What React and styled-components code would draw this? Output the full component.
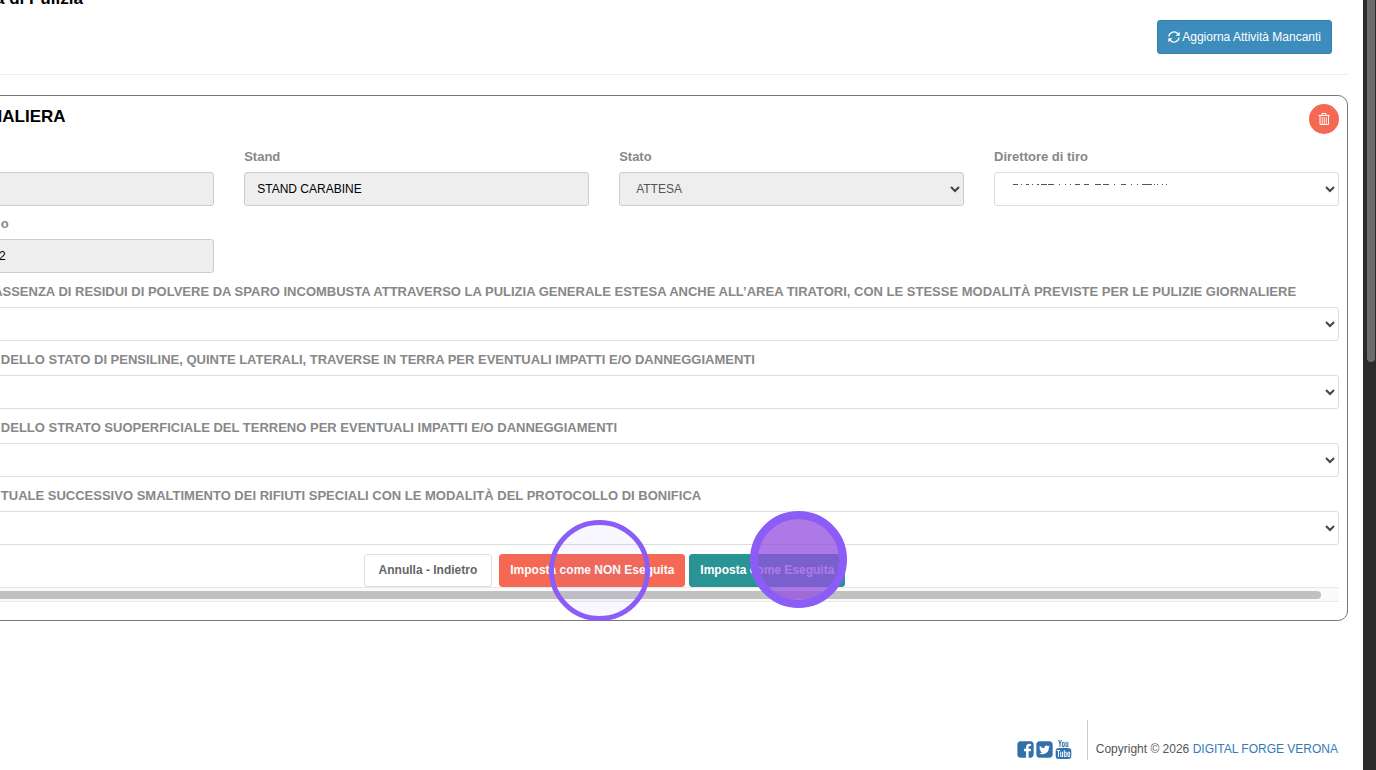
import React from 'react';
import styled, { createGlobalStyle } from 'styled-components';
import { TfiYoutube } from 'react-icons/tfi';

const GlobalStyle = createGlobalStyle`
    * {
        box-sizing: border-box;
    }
    body {
        margin: 0;
        overflow: hidden;
        background: #fff;
        color: #000;
        font-family: "Liberation Sans", Arial, sans-serif;
        font-size: 12px;
        line-height: 20px;
    }
    button, input, select {
        font: inherit;
    }
`;

const Window = styled.div`
    display: flex;
    min-height: 100vh;
    overflow: hidden;
`;

const Page = styled.div`
    flex: 1;
    min-width: 0;
    display: flex;
    flex-direction: column;
    padding-right: 15px;
    margin-left: -11px;
`;

const ScrollTrack = styled.div`
    width: 13px;
    padding: 0 1px 0 4px;
    background: #2b2b2b;
`;

const ScrollThumb = styled.div`
    height: 47vh;
    border-radius: 0 0 4px 4px;
    background: #6b6b6b;
`;

const Header = styled.header`
    display: flex;
    justify-content: space-between;
    align-items: flex-start;
    height: 75px;
    padding: 0 16px 0 6px;
    border-bottom: 1px solid #eee;
`;

const PageTitle = styled.h1`
    margin: -11px 0 0;
    font-size: 17px;
    line-height: 20px;
`;

const RefreshButton = styled.button`
    display: flex;
    align-items: center;
    gap: 2px;
    height: 34px;
    margin-top: 20px;
    padding: 0 10px;
    border: 1px solid #367fa9;
    border-radius: 3px;
    background: #3c8dbc;
    color: #fff;
`;

const Card = styled.section`
    margin-top: 20px;
    border: 1px solid #777;
    border-radius: 10px;
    padding: 8px 8px 18px 0;
`;

const CardHeader = styled.div`
    display: flex;
    justify-content: space-between;
    align-items: flex-start;
    height: 45px;
`;

const CardTitle = styled.h2`
    margin: 3px 0 0;
    font-size: 17px;
    line-height: 20px;
`;

const DeleteButton = styled.button`
    display: flex;
    align-items: center;
    justify-content: center;
    width: 30px;
    height: 30px;
    padding: 0;
    border: 0;
    border-radius: 50%;
    background: #f56954;
    color: #fff;
`;

const Fields = styled.div`
    display: grid;
    grid-template-columns: 13fr 20fr 20fr 20fr;
    gap: 10px 30px;
    margin-bottom: 11px;
`;

const Field = styled.div`
    display: flex;
    flex-direction: column;
    position: relative;
`;

const Questions = styled.div`
    display: flex;
    flex-direction: column;
    gap: 11px;
`;

const Label = styled.label`
    height: 23px;
    line-height: 16px;
    font-size: 13px;
    font-weight: bold;
    color: #888;
    white-space: pre;
`;

const Input = styled.input`
    width: 100%;
    height: 34px;
    padding: 0 12px 0 ${p => (p.$cut ? '8px' : '12px')};
    border: 1px solid #ccc;
    border-radius: 3px;
    background: #eee;
    color: #000;
`;

const Select = styled.select`
    appearance: none;
    width: 100%;
    height: 34px;
    padding: 0 24px 0 16px;
    border: 1px solid ${p => (p.disabled ? '#ccc' : '#ddd')};
    border-radius: 3px;
    background: ${p => (p.disabled ? '#eee' : '#fff')}
        url("data:image/svg+xml,%3Csvg xmlns='http://www.w3.org/2000/svg' width='10' height='7' fill='none' stroke='%23444' stroke-width='2'%3E%3Cpath d='M1 1l4 4 4-4'/%3E%3C/svg%3E")
        no-repeat right 3px center;
    color: #555;
    opacity: 1;
`;

const Redacted = styled.svg`
    position: absolute;
    left: 17px;
    bottom: 21px;
`;

const Actions = styled.div`
    display: flex;
    justify-content: center;
    gap: 4px;
    padding: 9px 120px 0 0;
`;

const colors = {
    danger: '#f56954',
    success: '#2a9494',
};

const Button = styled.button`
    height: 33px;
    padding: 0 ${p => (p.$color ? '10px' : '14px')} 2px;
    margin-right: ${p => (p.$color ? '0' : '3px')};
    border: 1px solid ${p => colors[p.$color] || '#ddd'};
    border-radius: 3px;
    background: ${p => colors[p.$color] || '#fff'};
    color: ${p => (p.$color ? '#fff' : '#666')};
    font-weight: bold;
    white-space: nowrap;
`;

const Mark = styled.span`
    position: relative;
    display: inline-flex;
`;

const Circle = styled.span`
    position: absolute;
    left: ${p => p.$left}px;
    top: ${p => p.$top}px;
    width: ${p => p.$size}px;
    height: ${p => p.$size}px;
    border: ${p => p.$ring}px solid #8b5cf6;
    border-radius: 50%;
    background: ${p => p.$fill};
    pointer-events: none;
`;

const HorizontalTrack = styled.div`
    height: 15px;
    padding: 3px 18px 3px 0;
    border: solid #e8e8e8;
    border-width: 1px 0;
    background: #fafafa;
`;

const HorizontalThumb = styled.div`
    height: 8px;
    border-radius: 4px;
    background: #c1c1c1;
`;

const Footer = styled.footer`
    display: flex;
    justify-content: flex-end;
    margin-top: auto;
    padding: 0 10px 10px 0;
    color: #555;
`;

const Social = styled.div`
    display: flex;
    align-items: flex-end;
    height: 40px;
    padding: 0 14px 1px 0;
    border-right: 1px solid #ccc;
    a {
        display: flex;
        color: #3071a9;
    }
`;

const Copyright = styled.div`
    padding: 19px 0 0 8px;
    a {
        color: #337ab7;
        text-decoration: none;
    }
`;

const RefreshIcon = () => (
    <svg width="12" height="12" viewBox="0 0 12 12" fill="none" stroke="currentColor" strokeWidth="1.3">
        <path d="M.9 5.300a5.100 5.100 0 0 1 9.100-2.400" />
        <path d="M11.700.800v4H7.700z" fill="currentColor" stroke="none" />
        <path d="M11.100 6.700a5.100 5.100 0 0 1-9.100 2.400" />
        <path d="M.3 11.200v-4h4z" fill="currentColor" stroke="none" />
    </svg>
);

const TrashIcon = () => (
    <svg width="12" height="14" viewBox="0 0 12 14" fill="none" stroke="currentColor">
        <path d="M.5 3.500h11M4 3.500V1.500h4v2M2 3.500v9h8.500v-9" />
        <path d="M4.200 5v7M6.250 5v7M8.300 5v7" strokeWidth=".9" />
    </svg>
);

const FacebookIcon = () => (
    <svg width="19" height="19" viewBox="0 0 1792 1792" fill="currentColor">
        <path d="M1376 128q119 0 203.500 84.500t84.500 203.500v960q0 119-84.500 203.500t-203.500 84.500h-188v-595h199l30-232h-229v-148q0-56 23.500-84t91.500-28l122-1v-207q-63-9-178-9-136 0-217.500 80t-81.500 226v171h-200v232h200v595h-532q-119 0-203.500-84.500t-84.500-203.500v-960q0-119 84.500-203.500t203.500-84.500h960z" />
    </svg>
);

const TwitterIcon = () => (
    <svg width="19" height="19" viewBox="0 0 1792 1792" fill="currentColor">
        <path d="M1408 610q-56 25-121 34 68-40 93-117-65 38-134 51-61-66-153-66-87 0-148.500 61.500t-61.500 148.500q0 29 5 48-129-7-242-65t-192-155q-29 50-29 106 0 114 91 175-47-1-100-26v2q0 75 50 133.500t123 72.500q-29 8-51 8-13 0-39-4 21 63 74.500 104t121.500 42q-116 90-261 90-26 0-50-3 148 94 322 94 112 0 210-35.500t168-95 120.500-137 75-162 24.500-168.500q0-18-1-27 63-45 105-109zm256-194v960q0 119-84.500 203.500t-203.500 84.500h-960q-119 0-203.500-84.500t-84.500-203.500v-960q0-119 84.500-203.500t203.500-84.500h960q119 0 203.500 84.500t84.500 203.500z" />
    </svg>
);

const questions = [
    ' ASSENZA DI RESIDUI DI POLVERE DA SPARO INCOMBUSTA ATTRAVERSO LA PULIZIA GENERALE ESTESA ANCHE ALL’AREA TIRATORI, CON LE STESSE MODALITÀ PREVISTE PER LE PULIZIE GIORNALIERE',
    '   DELLO STATO DI PENSILINE, QUINTE LATERALI, TRAVERSE IN TERRA PER EVENTUALI IMPATTI E/O DANNEGGIAMENTI',
    '   DELLO STRATO SUOPERFICIALE DEL TERRENO PER EVENTUALI IMPATTI E/O DANNEGGIAMENTI',
    '   TUALE SUCCESSIVO SMALTIMENTO DEI RIFIUTI SPECIALI CON LE MODALITÀ DEL PROTOCOLLO DI BONIFICA',
];

export default () => (
    <Window>
        <GlobalStyle />
        <Page>
            <Header>
                <PageTitle>a di Pulizia</PageTitle>
                <RefreshButton type="button">
                    <RefreshIcon />
                    Aggiorna Attività Mancanti
                </RefreshButton>
            </Header>
            <Card>
                <CardHeader>
                    <CardTitle>NALIERA</CardTitle>
                    <DeleteButton type="button" aria-label="Elimina">
                        <TrashIcon />
                    </DeleteButton>
                </CardHeader>
                <form>
                    <Fields>
                        <Field>
                            <Label htmlFor="data"> </Label>
                            <Input id="data" $cut readOnly value="" />
                        </Field>
                        <Field>
                            <Label htmlFor="stand">Stand</Label>
                            <Input id="stand" readOnly value="STAND CARABINE" />
                        </Field>
                        <Field>
                            <Label htmlFor="stato">Stato</Label>
                            <Select id="stato" disabled>
                                <option>ATTESA</option>
                            </Select>
                        </Field>
                        <Field>
                            <Label htmlFor="direttore">Direttore di tiro</Label>
                            <Select id="direttore" />
                            <Redacted width="158" height="1" stroke="#555">
                                <path d="M2 .5h5m3 0h1m4 0h3m3 0h1m4 0h2m2 0h6m1 0h6m5 0h1m5 0h1m4 0h1m4 0h5m4 0h5m6 0h6m2 0h6m5 0h1m6 0h5m5 0h1m5 0h1m4 0h10m2 0h1m2 0h1m4 0h1m3 0h1" />
                            </Redacted>
                        </Field>
                        <Field>
                            <Label htmlFor="numero">   o</Label>
                            <Input id="numero" $cut readOnly value="2" />
                        </Field>
                    </Fields>
                    <Questions>
                        {questions.map((text, i) => (
                            <Field key={text}>
                                <Label htmlFor={`domanda-${i}`}>{text}</Label>
                                <Select id={`domanda-${i}`} />
                            </Field>
                        ))}
                    </Questions>
                    <Actions>
                        <Button type="button">Annulla - Indietro</Button>
                        <Mark>
                            <Button type="button" $color="danger">Imposta come NON Eseguita</Button>
                            <Circle $left={50} $top={-34} $size={101} $ring={5} $fill="rgba(139, 92, 246, 0.05)" />
                        </Mark>
                        <Mark>
                            <Button type="button" $color="success">Imposta come Eseguita</Button>
                            <Circle $left={61} $top={-43} $size={97} $ring={8} $fill="rgba(147, 81, 223, 0.77)" />
                        </Mark>
                    </Actions>
                    <HorizontalTrack>
                        <HorizontalThumb />
                    </HorizontalTrack>
                </form>
            </Card>
            <Footer>
                <Social>
                    <a href="#facebook" aria-label="Facebook"><FacebookIcon /></a>
                    <a href="#twitter" aria-label="Twitter"><TwitterIcon /></a>
                    <a href="#youtube" aria-label="YouTube"><TfiYoutube size={19} /></a>
                </Social>
                <Copyright>
                    Copyright © 2026 <a href="#forge">DIGITAL FORGE VERONA</a>
                </Copyright>
            </Footer>
        </Page>
        <ScrollTrack>
            <ScrollThumb />
        </ScrollTrack>
    </Window>
);
